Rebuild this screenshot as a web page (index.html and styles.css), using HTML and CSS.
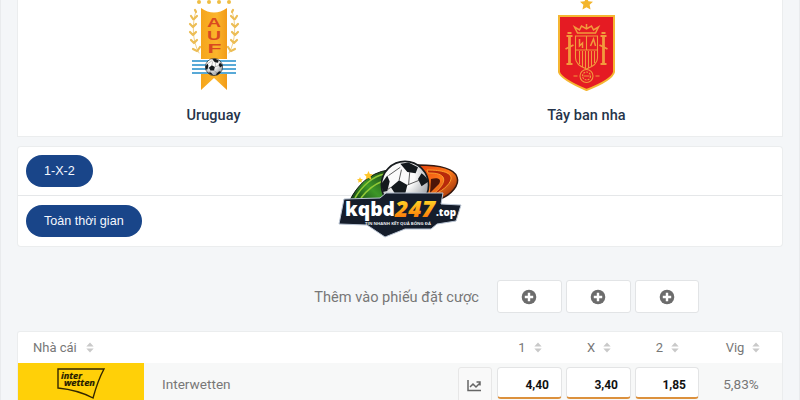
FILE: index.html
```html
<!DOCTYPE html>
<html lang="vi">
<head>
<meta charset="utf-8">
<title>Uruguay - Tây ban nha</title>
<link rel="stylesheet" href="styles.css">
</head>
<body>
<svg class="defs" width="0" height="0">
  <defs>
    <symbol id="sort" viewBox="0 0 8 12"><path d="M0 5 4 .5 8 5zM0 7h8L4 11.500z"/></symbol>
    <symbol id="plus" viewBox="0 0 16 16"><circle cx="8" cy="8" r="7.300"/><path d="M8 3.800v8.400M3.800 8h8.400" stroke="#fff" stroke-width="2.400"/></symbol>
    <symbol id="star" viewBox="0 0 20 20"><path d="m10 0 3 6.500 7 .8-5.200 4.800 1.400 7.200L10 15.700l-6.200 3.600 1.400-7.200L0 7.300l7-.8z"/></symbol>
    <radialGradient id="leather" cx=".4" cy=".3" r=".75"><stop offset=".4" stop-color="#fafafa"/><stop offset="1" stop-color="#8c9196"/></radialGradient>
    <g id="ball">
      <circle r="20" fill="url(#leather)" stroke="#171b1e" stroke-width="1.400"/>
      <path fill="#14191d" d="m-5-4 7 4-2 8h-8l-4-6zM-4-18 3-19l8 4-2 5-7-1zM-20-1l5-7 2 5-2 8-4 1zM20-3l-6 4-3-6 3-5c4 3 5 5 6 7zM-14 13l7 0 5 6c-5-1-8-2-12-6zM16 11l-4-1-6 5-1 4c5-1 8-4 11-8z"/>
      <path fill="none" stroke="#555" stroke-width=".8" d="m-5-4 2-9M2 0l10-4M0 8l7 6M-8 8l-2 5M-12 2l-3 2M4-11l-1 11M-4-15l-10 7"/>
    </g>
    <g id="laurel" fill="none" stroke="#ecbd55" stroke-linecap="round">
      <path stroke-width=".7" d="M0 0c-4 12-4 30 3 42"/>
      <path stroke-width="2.200" d="m0 1-1-2M-3 8l-2-3m3 3 3-3M-3 16l-3-3m3 3 3-3M-3 24l-3-3m3 3 3-3M-2 32l-3-3m3 3 3-3M1 40l-4-2m5 1 2-3"/>
    </g>
    <linearGradient id="gold" x2="0" y2="1"><stop offset=".2" stop-color="#ffe02c"/><stop offset=".6" stop-color="#ffa013"/><stop offset="1" stop-color="#f35a04"/></linearGradient>
    <linearGradient id="ribbon" x2="1"><stop stop-color="#f5a51c"/><stop offset=".6" stop-color="#fbb52b"/><stop offset="1" stop-color="#f29b18"/></linearGradient>
    <linearGradient id="green" x2="1" y1="1" y2="0"><stop stop-color="#082c10"/><stop offset=".5" stop-color="#3d9727"/><stop offset="1" stop-color="#173e15"/></linearGradient>
    <linearGradient id="fire" x2="1" y2="1"><stop stop-color="#e2400b"/><stop offset=".5" stop-color="#ff7a1b"/><stop offset="1" stop-color="#7c1b08"/></linearGradient>
  </defs>
</svg>
<main class="page">
  <section class="card teams">
    <div class="team">
      <svg class="crest" width="60" height="92" viewBox="0 0 60 92">
        <g fill="#efbd43"><circle cx="15" cy="2" r="2"/><circle cx="25" cy="2" r="2"/><circle cx="35" cy="2" r="2"/><circle cx="45" cy="2" r="2"/></g>
        <use href="#laurel" x="12" y="11"/><use href="#laurel" transform="translate(48 11) scale(-1 1)"/>
        <path d="M17 8q13 9 26 0v82L30 78 17 90z" fill="url(#ribbon)"/>
        <g class="initials"><text x="23" y="27" textLength="14" lengthAdjust="spacingAndGlyphs">A</text><text x="23" y="40" textLength="14" lengthAdjust="spacingAndGlyphs">U</text><text x="23.500" y="53" textLength="14" lengthAdjust="spacingAndGlyphs">F</text></g>
        <path fill="#fff" d="M8 59h44v15H8z"/>
        <path stroke="#58a9d7" stroke-width="2" d="M8 61h44M8 65h44M8 69h44M8 73h44"/>
        <use href="#ball" transform="translate(30 67) scale(.43)"/>
      </svg>
      <h2>Uruguay</h2>
    </div>
    <div class="team">
      <svg class="crest" width="60" height="92" viewBox="0 0 60 92">
        <use href="#star" x="23" y="-3" width="13" height="13" fill="#f3b52c"/>
        <path d="M2 16h55v56q-2 8-27.500 18Q4 79 2 72z" fill="#e51b23" stroke="#f5b632" stroke-width="2"/>
        <g transform="translate(-.5)" fill="none" stroke="#f29a3d" stroke-width="1.100">
          <path d="M19 36h22v22q0 7-11 11-11-4-11-11zM19 50h22M30 36v14M23 51v13M26 51v16M29 51v17M32 51v17M35 51v15M38 51v12"/>
          <path stroke-width="1.500" d="m21 33-3-6 5 3 2-4 5 3 5-3 2 4 5-3-3 6zM30 24v4M23 39v7l3-3v5M34 46l3-7 2 7"/>
          <path stroke-width="2.800" d="M13 36v27M47 36v27"/>
          <path stroke-width="1.800" d="M10 36h6M10 64h6M44 36h6M44 64h6M9 49l8-4M43 45l8 4M11 33h4M45 33h4"/>
          <circle cx="30" cy="76" r="6.500"/><circle cx="30" cy="76" r="4" stroke-dasharray="2 1"/><path d="M17 76h4M39 76h4M27 76h6"/>
        </g>
      </svg>
      <h2>Tây ban nha</h2>
    </div>
  </section>

  <section class="card filters">
    <div class="filter"><button class="pill">1-X-2</button></div>
    <div class="filter"><button class="pill">Toàn thời gian</button></div>
    <svg class="watermark" width="130" height="80" viewBox="0 0 130 80">
      <path d="M15 40C22 26 34 13 53 10L50 44z" fill="url(#green)" stroke="#101712"/>
      <path d="M20 38C27 26 38 16 50 14M26 38q9-12 22-17" fill="none" stroke="#91c936" stroke-width="1.600"/>
      <path d="M83 5c20 0 36 3 39 12 3 8-6 18-17 22l-22 1z" fill="url(#fire)" stroke="#34180f" stroke-width="1.500"/>
      <path d="M92 10c16 0 25 3 24 9s-10 13-20 17c9-7 15-14 12-19-3-4-10-4-15-4z" fill="#b82a0b" stroke="#ffb135" stroke-width=".8"/>
      <path d="M96 19c7-2 11 0 8 5l-9 9z" fill="#4c1608"/>
      <use href="#star" x="29" y="11" width="9" height="9" fill="#ffc629"/><use href="#star" x="22" y="17" width="6" height="6" fill="#ffc629"/>
      <use href="#ball" transform="translate(70 25) scale(1.180)"/>
      <path d="m9 39 36-1 6-5h57l-2 11 20 1-5 16-19 3-6 5H70l-20 8-18-12-28-1z" fill="#151d2b" stroke="#b9c4d3"/>
      <g class="brand">
        <text x="10" y="56" textLength="50" lengthAdjust="spacingAndGlyphs" fill="#fff" font-size="20">kqbd</text>
        <text class="digits" x="60" y="56.500" textLength="40" lengthAdjust="spacingAndGlyphs" fill="url(#gold)" font-size="23">247</text>
        <text x="101" y="55.500" textLength="20" lengthAdjust="spacingAndGlyphs" fill="#fff" font-size="11">.top</text>
        <text class="tagline" x="30" y="65" textLength="66" lengthAdjust="spacingAndGlyphs" fill="#e8ebef" font-size="4.200">TIN NHANH KẾT QUẢ BÓNG ĐÁ</text>
      </g>
    </svg>
  </section>

  <section class="slip odds-grid">
    <span class="slip-label">Thêm vào phiếu đặt cược</span>
    <button class="add"><svg width="16" height="16"><use href="#plus"/></svg></button>
    <button class="add"><svg width="16" height="16"><use href="#plus"/></svg></button>
    <button class="add"><svg width="16" height="16"><use href="#plus"/></svg></button>
  </section>

  <section class="card table">
    <div class="head odds-grid">
      <span class="bookie-head">Nhà cái <svg class="sort"><use href="#sort"/></svg></span>
      <span>1 <svg class="sort"><use href="#sort"/></svg></span>
      <span>X <svg class="sort"><use href="#sort"/></svg></span>
      <span>2 <svg class="sort"><use href="#sort"/></svg></span>
      <span>Vig <svg class="sort"><use href="#sort"/></svg></span>
    </div>
    <div class="row odds-grid">
      <div class="bookie">
        <div class="bookie-logo">
          <svg width="50" height="34" viewBox="0 0 50 34">
            <path d="M2 3h46q-6 11-11 29Q22 24 2 22z" fill="none" stroke="#332600" stroke-width="1.400"/>
            <g class="wetten"><text x="5" y="12.500" textLength="21" lengthAdjust="spacingAndGlyphs">inter</text><text x="8" y="20" textLength="31" lengthAdjust="spacingAndGlyphs">wetten</text></g>
          </svg>
        </div>
        <span class="bookie-name">Interwetten</span>
        <button class="chart"><svg width="14" height="12" viewBox="0 0 14 12"><path d="M1 0v10.500h13M3 7l3-3 3 3 4-4M9.500 2H13v3.500" fill="none" stroke="#666" stroke-width="1.500"/></svg></button>
      </div>
      <span class="odd">4,40</span>
      <span class="odd">3,40</span>
      <span class="odd">1,85</span>
      <span class="vig">5,83%</span>
    </div>
  </section>
</main>
</body>
</html>
```
FILE: styles.css
```css
* { box-sizing: border-box; }
body { margin: 0; background: #f4f6f8; font-family: Roboto, sans-serif; color: #777; }
button { font: inherit; margin: 0; padding: 0; }
svg { display: block; flex: none; }
.defs { position: absolute; }
.page { height: 400px; overflow: hidden; padding: 0 17px; border: solid #e9ebed; border-width: 0 1px; }
.card { background: #fff; box-shadow: 0 0 0 1px #ebedee; }

.teams { display: flex; height: 136px; padding: 0 9px; }
.team { flex: 1; display: flex; flex-direction: column; align-items: center; }
.crest { overflow: hidden; }
.initials { font: 700 12.500px "Liberation Sans", sans-serif; fill: #d94a20; }
.team h2 { margin: 15px 0 0; font-size: 14.500px; line-height: 18px; font-weight: 500; letter-spacing: .05px; color: #26344a; }

.filters { position: relative; height: 99px; margin-top: 11px; border-radius: 3px; }
.filter { height: 48px; padding: 8px; }
.filter + .filter { height: 51px; border-top: 1px solid #e5e7e9; padding-top: 9px; }
.pill { display: block; height: 32px; padding: 0 18px; border: 0; border-radius: 16px; background: #194589; color: #f5f8ff; font: 12.600px "Liberation Sans", sans-serif; }
.watermark { position: absolute; left: 317px; top: 13px; }
.brand { font-family: "Open Sans", sans-serif; font-weight: 800; }
.digits { font-style: italic; }
.tagline { font-weight: 700; }

.odds-grid { display: grid; grid-template-columns: 475px 65px 65px 64px 79px; column-gap: 4px; }
.slip { margin-top: 34px; height: 33px; align-items: center; }
.slip-label { text-align: right; padding-right: 14px; font-size: 14.600px; }
.add { height: 33px; padding-right: 1px; display: flex; align-items: center; justify-content: center; background: #fff; border: 1px solid #e2e4e6; border-radius: 3px; fill: #6c6c6c; }

.table { margin-top: 19px; border-radius: 2px 2px 0 0; }
.head { height: 31px; padding-bottom: 1px; align-items: center; font-size: 13px; }
.head span { display: flex; align-items: center; justify-content: center; gap: 8px; padding-left: 1px; }
.head .bookie-head { justify-content: flex-start; gap: 9px; padding-left: 15px; }
.sort { width: 8px; height: 11px; fill: #c9c9c9; }
.row { height: 44px; background: #f7f8f8; }
.bookie { display: flex; }
.bookie-logo { width: 126px; height: 44px; padding: 3px 0 0 38px; background: #ffd008; }
.wetten { font: italic 700 9px "Open Sans", sans-serif; fill: #241a00; stroke: #241a00; stroke-width: .2; }
.bookie-name { flex: 1; padding: 12px 0 0 18px; font-size: 13.600px; line-height: 19px; }
.chart { width: 34px; height: 44px; margin: 4px 1px 0 0; padding: 12px 0 0 8px; background: #f9f9f9; border: 1px solid #e7e7e7; border-radius: 3px; display: flex; }
.odd { height: 32px; margin-top: 4px; padding-right: 12px; background: #fff; border: 1px solid #e3e4e5; border-bottom: 2px solid #dc913d; border-radius: 4px; color: #111; font-size: 12px; line-height: 34px; font-weight: 700; text-align: right; }
.row .vig { padding: 12px 3px 0 0; text-align: center; font-size: 13.600px; line-height: 19px; }
```
